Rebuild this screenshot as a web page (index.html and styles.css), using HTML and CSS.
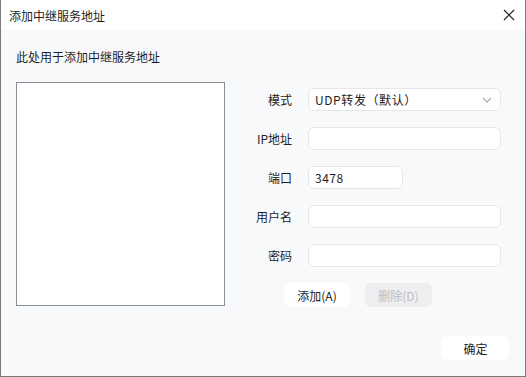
FILE: index.html
```html
<!DOCTYPE html>
<html lang="zh-CN">
<head>
    <meta charset="UTF-8">
    <title>添加中继服务地址</title>
    <link rel="stylesheet" href="styles.css">
</head>
<body>
    <div class="window">
        <div class="titlebar">
            <span class="title">添加中继服务地址</span>
            <svg class="close" width="12" height="12" viewBox="0 0 12 12">
                <path d="M1 1 L11 11 M11 1 L1 11" stroke="#222" stroke-width="1.2" fill="none"/>
            </svg>
        </div>
        <div class="content">
            <div class="hint">此处用于添加中继服务地址</div>
            <div class="main">
                <div class="server-list"></div>
                <div class="form">
                    <label>模式</label>
                    <div class="field select">
                        <span>UDP转发（默认）</span>
                        <svg width="10" height="6" viewBox="0 0 10 6">
                            <path d="M1 1 L5 5 L9 1" stroke="#b0b0b4" stroke-width="1.3" fill="none"/>
                        </svg>
                    </div>
                    <label>IP地址</label>
                    <div class="field"></div>
                    <label>端口</label>
                    <div class="field short">3478</div>
                    <label>用户名</label>
                    <div class="field"></div>
                    <label>密码</label>
                    <div class="field"></div>
                    <div class="actions">
                        <button class="btn">添加(A)</button>
                        <button class="btn disabled">删除(D)</button>
                    </div>
                </div>
            </div>
            <div class="footer">
                <button class="btn ok">确定</button>
            </div>
        </div>
    </div>
</body>
</html>
```

FILE: styles.css
```css
html, body {
    margin: 0;
    padding: 0;
}
body {
    font-family: "Noto Sans CJK SC", "Microsoft YaHei", sans-serif;
    font-size: 12px;
    color: #1e1e1e;
    background: #f8f9fb;
}
.window {
    width: 526px;
    height: 377px;
    box-sizing: border-box;
    border: 1px solid #7b7b7b;
    border-top: none;
    display: flex;
    flex-direction: column;
    background: #f8f9fb;
}
.titlebar {
    height: 30px;
    flex-shrink: 0;
    background: #fff;
    display: flex;
    align-items: center;
    justify-content: space-between;
    padding: 0 9px 0 8px;
}
.title {
    font-size: 12px;
}
.close {
    margin-right: 1px;
}
.content {
    flex: 1;
    display: flex;
    flex-direction: column;
    padding: 19px 16px 16px 15px;
}
.hint {
    line-height: 16px;
}
.main {
    display: flex;
    margin-top: 17px;
}
.server-list {
    width: 207px;
    height: 222px;
    border: 1px solid #8a8e98;
    background: #fff;
}
.form {
    display: grid;
    grid-template-columns: 52px 193px;
    grid-auto-rows: 23px;
    column-gap: 16px;
    row-gap: 16px;
    margin: 6px 0 0 15px;
    align-items: center;
}
.form label {
    text-align: right;
    line-height: 23px;
}
.field {
    height: 23px;
    box-sizing: border-box;
    background: #fff;
    border: 1px solid #e6e6e9;
    border-radius: 6px;
    padding: 0 6px;
    line-height: 21px;
    display: flex;
    align-items: center;
}
.field.short {
    width: 95px;
    letter-spacing: 0.5px;
}
.select {
    justify-content: space-between;
    padding-right: 8px;
    letter-spacing: 0.6px;
}
.actions {
    grid-column: 1 / 3;
    display: flex;
    gap: 15px;
    padding-left: 44px;
    margin-top: 1px;
    height: 24px;
}
.btn {
    font-family: inherit;
    font-size: 12px;
    color: #1e1e1e;
    width: 66px;
    height: 24px;
    border: none;
    border-radius: 6px;
    background: #fff;
    padding: 0;
}
.btn.disabled {
    width: 67px;
    background: #eeeef0;
    color: #bdbdc0;
}
.footer {
    margin-top: auto;
    display: flex;
    justify-content: flex-end;
}
.btn.ok {
    width: 67px;
    height: 24px;
}
```
